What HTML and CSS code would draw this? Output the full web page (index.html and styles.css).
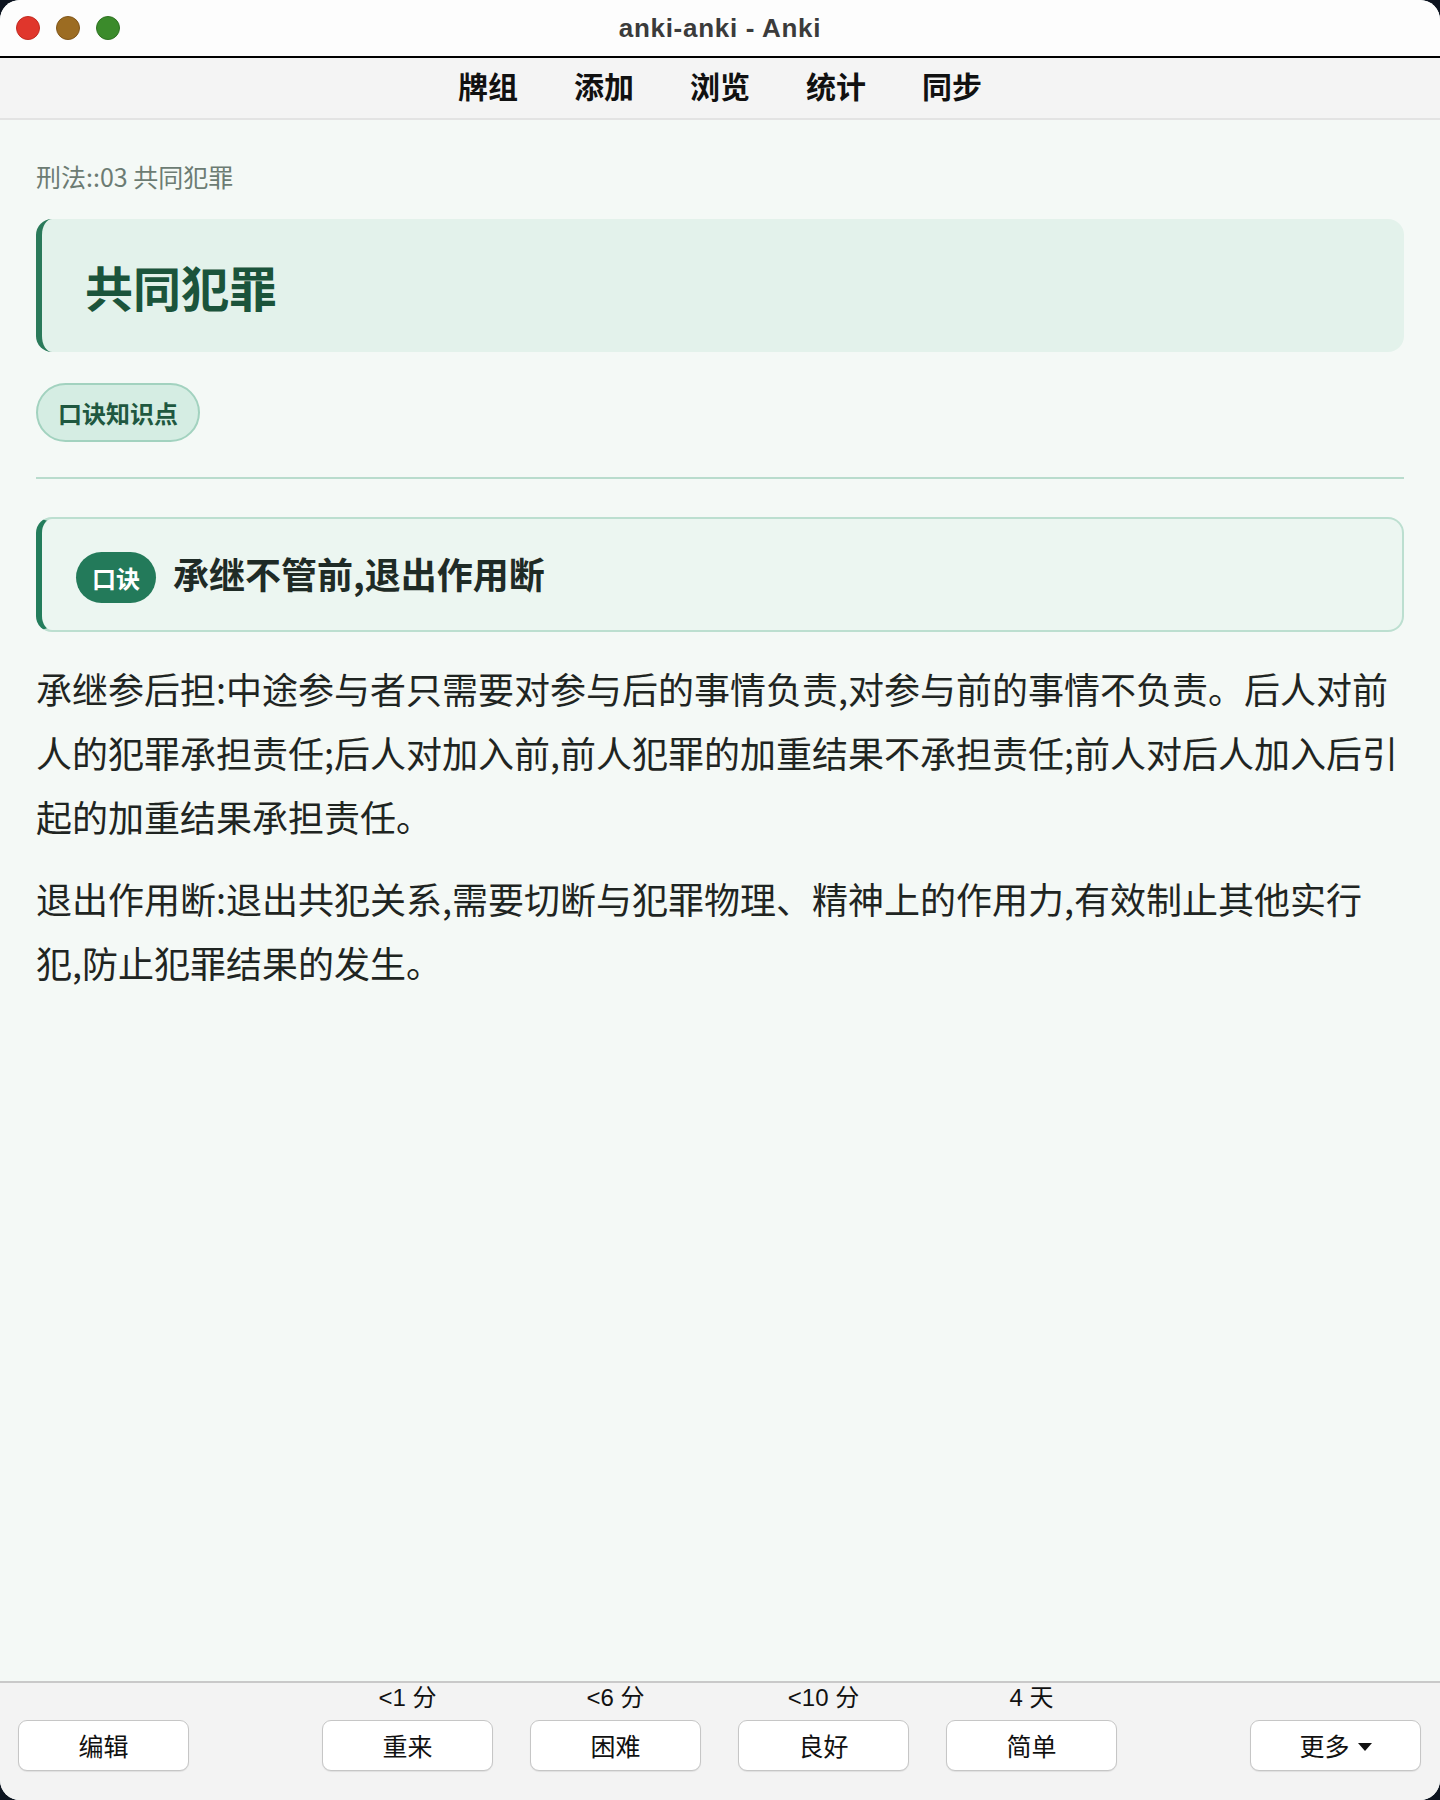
FILE: index.html
```html
<!DOCTYPE html>
<html lang="zh-CN">

<head>
    <meta charset="UTF-8">
    <meta name="viewport" content="width=device-width, initial-scale=1.0">
    <title>anki-anki - Anki</title>
    <link rel="stylesheet" href="styles.css">
</head>

<body>
    <div class="window">
        <!-- 标题栏 -->
        <div class="titlebar">
            <div class="lights">
                <span class="light red"></span>
                <span class="light yellow"></span>
                <span class="light green"></span>
            </div>
            <div class="title">anki-anki - Anki</div>
            <div></div>
        </div>

        <!-- 顶部菜单 -->
        <div class="toolbar">
            <a href="#">牌组</a>
            <a href="#">添加</a>
            <a href="#">浏览</a>
            <a href="#">统计</a>
            <a href="#">同步</a>
        </div>

        <!-- 卡片内容 -->
        <div class="main">
            <div class="deck">刑法::03 共同犯罪</div>
            <div class="topic">
                <h1>共同犯罪</h1>
            </div>
            <div class="tags">
                <span class="tag">口诀知识点</span>
            </div>
            <div class="divider"></div>
            <div class="rhyme">
                <span class="badge">口诀</span>
                <h2>承继不管前,退出作用断</h2>
            </div>
            <p>承继参后担:中途参与者只需要对参与后的事情负责,对参与前的事情不负责。后人对前人的犯罪承担责任;后人对加入前,前人犯罪的加重结果不承担责任;前人对后人加入后引起的加重结果承担责任。</p>
            <p>退出作用断:退出共犯关系,需要切断与犯罪物理、精神上的作用力,有效制止其他实行犯,防止犯罪结果的发生。</p>
        </div>

        <!-- 底部按钮 -->
        <div class="bottombar">
            <div class="ans left">
                <span class="due"></span>
                <button>编辑</button>
            </div>
            <div class="ans">
                <span class="due">&lt;1 分</span>
                <button>重来</button>
            </div>
            <div class="ans">
                <span class="due">&lt;6 分</span>
                <button>困难</button>
            </div>
            <div class="ans">
                <span class="due">&lt;10 分</span>
                <button>良好</button>
            </div>
            <div class="ans">
                <span class="due">4 天</span>
                <button>简单</button>
            </div>
            <div class="ans right">
                <span class="due"></span>
                <button>更多 <svg class="caret" width="14" height="8" viewBox="0 0 14 8"><path d="M0 0 L14 0 L7 8 Z" fill="#111"/></svg></button>
            </div>
        </div>
    </div>
</body>

</html>
```

FILE: styles.css
```css
* {
    margin: 0;
    padding: 0;
    box-sizing: border-box;
}

body {
    background-color: #0d1420;
    font-family: "Noto Sans CJK SC", sans-serif;
}

.window {
    width: 1440px;
    height: 1800px;
    border-radius: 20px;
    overflow: hidden;
    display: flex;
    flex-direction: column;
    background-color: #f4f9f6;
}

/* 标题栏 */
.titlebar {
    height: 58px;
    background-color: #fdfdfd;
    border-bottom: 2px solid #000;
    display: grid;
    grid-template-columns: 1fr auto 1fr;
    align-items: center;
}

.lights {
    display: flex;
    gap: 16px;
    padding-left: 16px;
}

.light {
    width: 24px;
    height: 24px;
    border-radius: 50%;
}

.red {
    background-color: #e0362c;
    border: 1px solid #c22a20;
}

.yellow {
    background-color: #9c6c22;
    border: 1px solid #80561a;
}

.green {
    background-color: #3b8b2b;
    border: 1px solid #2e7222;
}

.title {
    font-family: "Liberation Sans", "Noto Sans CJK SC", sans-serif;
    font-size: 26px;
    font-weight: bold;
    letter-spacing: 0.7px;
    color: #3b3b3b;
}

/* 菜单 */
.toolbar {
    height: 62px;
    padding-bottom: 6px;
    background-color: #f4f4f4;
    border-bottom: 2px solid #e3e3e3;
    display: flex;
    justify-content: center;
    align-items: center;
    gap: 56px;
}

.toolbar a {
    font-size: 30px;
    font-weight: bold;
    line-height: 40px;
    color: #111;
    text-decoration: none;
}

/* 内容 */
.main {
    flex: 1;
    padding: 40px 36px 0;
    color: #1f2522;
}

.deck {
    font-size: 25px;
    line-height: 32px;
    color: #6c7c73;
    margin-bottom: 27px;
}

.topic {
    background-color: #e3f2eb;
    border-left: 6px solid #2a7a5a;
    border-radius: 16px;
    padding: 0 43px;
    height: 133px;
    display: flex;
    align-items: center;
}

.topic h1 {
    font-size: 48px;
    font-weight: bold;
    color: #1b543b;
    line-height: 60px;
}

.tags {
    margin-top: 31px;
}

.tag {
    display: inline-block;
    height: 59px;
    line-height: 55px;
    padding: 0 20px;
    font-size: 24px;
    font-weight: bold;
    color: #1f5840;
    background-color: #d5ede3;
    border: 2px solid #a2d2bf;
    border-radius: 30px;
}

.divider {
    height: 2px;
    background-color: #b9dccd;
    margin-top: 35px;
}

.rhyme {
    margin-top: 38px;
    height: 115px;
    background-color: #ecf6f1;
    border: 2px solid #bcdfd0;
    border-left: 6px solid #237d5c;
    border-radius: 16px;
    padding: 0 34px;
    display: flex;
    align-items: center;
}

.badge {
    display: inline-block;
    height: 51px;
    line-height: 51px;
    padding: 0 16px;
    margin-top: 6px;
    border-radius: 26px;
    background-color: #237a5a;
    color: #fff;
    font-size: 24px;
    font-weight: bold;
}

.rhyme h2 {
    margin-left: 17px;
    margin-bottom: 4px;
    font-size: 36px;
    font-weight: bold;
    line-height: 48px;
    color: #1f2b26;
}

.main p {
    font-size: 36px;
    line-height: 64px;
    margin-top: 24px;
}

.main p + p {
    margin-top: 18px;
}

/* 底部 */
.bottombar {
    height: 119px;
    background-color: #f3f3f3;
    border-top: 2px solid #c9c9c9;
    padding: 1px 19px 0 18px;
    display: grid;
    grid-template-columns: 1fr repeat(4, 171px) 1fr;
    column-gap: 37px;
    align-items: start;
}

.ans {
    display: flex;
    flex-direction: column;
    align-items: center;
}

.ans.left {
    align-items: flex-start;
}

.ans.right {
    align-items: flex-end;
}

.due {
    height: 28px;
    line-height: 28px;
    font-family: "Liberation Sans", "Noto Sans CJK SC", sans-serif;
    font-size: 24px;
    color: #111;
    margin-bottom: 8px;
}

.ans button {
    width: 171px;
    height: 51px;
    background-color: #fff;
    border: 1.5px solid #c6c6c6;
    border-radius: 9px;
    box-shadow: 0 1px 1px rgba(0, 0, 0, 0.08);
    font-family: "Noto Sans CJK SC", sans-serif;
    font-size: 25px;
    line-height: 1;
    color: #111;
    display: flex;
    justify-content: center;
    align-items: center;
    gap: 8px;
}

.caret {
    margin-top: 2px;
}
```
